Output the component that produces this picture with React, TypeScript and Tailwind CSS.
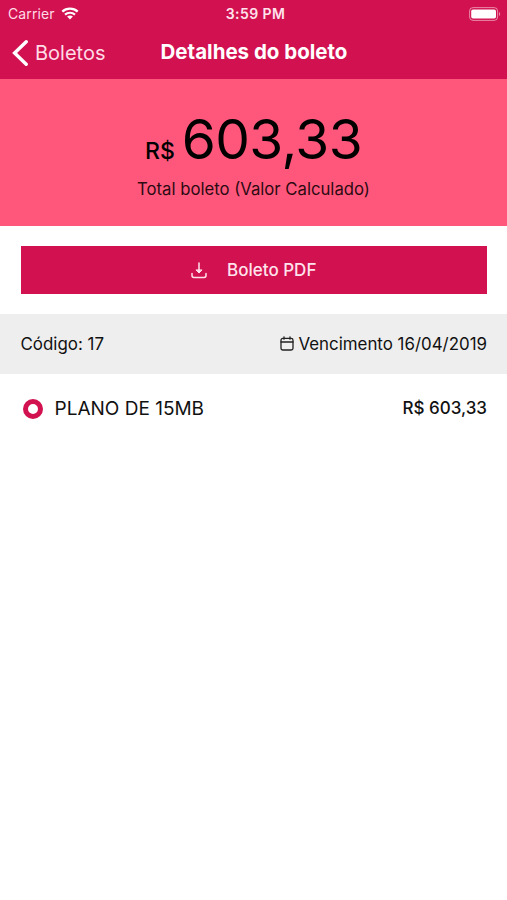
import React from 'react';

interface BoletoItem {
  id: number;
  description: string;
  value: string;
}

const boleto = {
  code: 17,
  total: '603,33',
  dueDate: '16/04/2019',
};

const items: BoletoItem[] = [{ id: 1, description: 'PLANO DE 15MB', value: '603,33' }];

function WifiIcon() {
  return (
    <svg width="18" height="13" viewBox="0 0 18 13" fill="none" stroke="#fff">
      <path d="M1.3 4.6C5.6.6 12.4.6 16.7 4.6" strokeWidth="2.3" />
      <path d="M4 7.6c2.8-2.5 7.2-2.5 10 0" strokeWidth="2.1" />
      <path d="M9 12.4 6.1 9.6c1.5-1.4 4.3-1.4 5.8 0z" fill="#fff" stroke="none" />
    </svg>
  );
}

function BatteryIcon() {
  return (
    <svg width="32" height="14" viewBox="0 0 32 14" fill="none">
      <rect x="0.6" y="0.6" width="28" height="12.8" rx="3.4" stroke="#fff" strokeOpacity="0.5" />
      <rect x="2.2" y="2.4" width="24.8" height="9.2" rx="1.8" fill="#fff" />
      <path d="M30 5v4c1.6-.6 1.6-3.4 0-4z" fill="#fff" fillOpacity="0.5" />
    </svg>
  );
}

function BackIcon() {
  return (
    <svg width="16" height="26" viewBox="0 0 16 26" fill="none" stroke="#fff" strokeWidth="3.4">
      <path d="M14.2 1.8 2.6 13l11.6 11.2" strokeLinecap="round" />
    </svg>
  );
}

function DownloadIcon() {
  return (
    <svg width="16" height="17" viewBox="0 0 16 17" fill="none" stroke="#ffe3ec" strokeWidth="1.5" strokeLinecap="round" strokeLinejoin="round">
      <path d="M8 1v9.6" />
      <path d="M5.2 8.2 8 11l2.8-2.8z" fill="#ffe3ec" strokeWidth="1" />
      <path d="M1 11.4v2.2c0 1.2.8 1.9 1.9 1.9h10.2c1.1 0 1.9-.7 1.9-1.9v-2.2" />
    </svg>
  );
}

function CalendarIcon() {
  return (
    <svg width="14" height="15" viewBox="0 0 14 15" fill="none" stroke="#222" strokeWidth="1.3" strokeLinecap="round">
      <rect x="1" y="2.4" width="12" height="11.6" rx="1.8" />
      <path d="M1 6h12M4 .8v2.4M10 .8v2.4" />
    </svg>
  );
}

export default function App() {
  return (
    <div className="h-[900px] w-[507px] overflow-hidden bg-white font-['Inter',sans-serif] text-[#111]">
      <header className="h-[79px] bg-[#d21150] text-white">
        <div className="grid h-[27px] grid-cols-[1fr_auto_1fr] items-center pr-1.5 pl-2 text-[14px] leading-none">
          <div className="flex items-center gap-1.5">
            <span className="tracking-[0.1px] text-[#ffdbe6]">Carrier</span>
            <WifiIcon />
          </div>
          <span className="pt-px pl-0.5 text-[14px] font-semibold tracking-[0.4px] text-[#ffe3ec]">3:59 PM</span>
          <div className="flex justify-end">
            <BatteryIcon />
          </div>
        </div>
        <div className="grid h-[51px] grid-cols-[1fr_auto_1fr] items-center pr-[11px] pl-3 leading-none">
          <button className="flex items-center gap-[7px] text-[20px] text-[#ffdbe6]">
            <BackIcon />
            <span>Boletos</span>
          </button>
          <h1 className="text-[20.5px] font-bold">Detalhes do boleto</h1>
        </div>
      </header>

      <section className="flex h-[146.5px] flex-col items-center bg-[#ff577c] pt-[30px]">
        <div className="flex h-[60px] items-baseline gap-[7px] leading-[60px] text-black">
          <span className="text-[23px] font-medium">R$</span>
          <span className="text-[55px] tracking-[-0.6px]">{boleto.total}</span>
        </div>
        <p className="mt-[9px] text-[16.7px] leading-[22px] text-[#2b0a12]">Total boleto (Valor Calculado)</p>
      </section>

      <div className="pt-5 pr-5 pb-5 pl-[20.5px]">
        <button className="flex h-[48.5px] w-full items-center justify-center gap-5 bg-[#d21150] pt-px text-[17px] font-medium text-[#ffe3ec]">
          <DownloadIcon />
          <span>Boleto PDF</span>
        </button>
      </div>

      <div className="flex h-[60px] items-center justify-between bg-[#eee] pr-5 pl-[20.5px] text-[16.9px]">
        <span className="pt-px">Código: {boleto.code}</span>
        <div className="flex items-center gap-1">
          <CalendarIcon />
          <span className="pt-px">Vencimento {boleto.dueDate}</span>
        </div>
      </div>

      <ul>
        {items.map((item) => (
          <li key={item.id} className="flex h-[69px] items-center justify-between pr-5 pl-[22.5px]">
            <div className="flex items-center gap-3">
              <span className="size-5 rounded-full border-[5px] border-[#d21150] bg-white" />
              <span className="pt-px text-[19px]">{item.description}</span>
            </div>
            <span className="text-[17px] font-medium">R$ {item.value}</span>
          </li>
        ))}
      </ul>
    </div>
  );
}
